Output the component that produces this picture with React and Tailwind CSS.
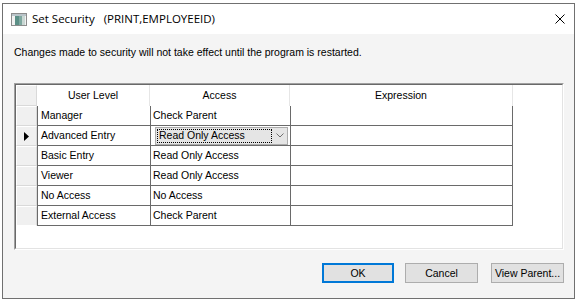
import React from 'react';

const rows = [
  { level: 'Manager', access: 'Check Parent' },
  { level: 'Advanced Entry', access: 'Read Only Access', active: true },
  { level: 'Basic Entry', access: 'Read Only Access' },
  { level: 'Viewer', access: 'Read Only Access' },
  { level: 'No Access', access: 'No Access' },
  { level: 'External Access', access: 'Check Parent' },
];

const sans = { fontFamily: '"Liberation Sans", Arial, sans-serif' };

const TitleIcon = () => (
  <svg width="16" height="13" viewBox="0 0 16 13">
    <rect x="0.5" y="0.5" width="15" height="12" fill="#f2f2f2" stroke="#8c8c8c" />
    <rect x="1" y="1" width="14" height="2" fill="#b9c4c9" />
    <rect x="4" y="3" width="10" height="9" fill="#7fa8a0" />
    <rect x="4" y="3" width="4" height="9" fill="#5b8f86" />
    <rect x="11" y="3" width="3" height="9" fill="#c9d7d3" />
  </svg>
);

const CloseIcon = () => (
  <svg width="10" height="10" viewBox="0 0 10 10">
    <path d="M0.5 0.5 L9.5 9.5 M9.5 0.5 L0.5 9.5" stroke="#000" strokeWidth="1" />
  </svg>
);

const RowHeader = ({ active, last }) => (
  <div className={`w-[21px] shrink-0 bg-[#f0f0f0] border border-white border-r-[#d9d9d9] ${last ? '' : 'border-b-[#d9d9d9]'} flex items-center justify-center`}>
    {active && (
      <svg width="5" height="9" viewBox="0 0 5 9">
        <path d="M0 0 L5 4.5 L0 9 Z" fill="#000" />
      </svg>
    )}
  </div>
);

const Combo = ({ value }) => (
  <div className="mx-[2px] my-[1px] flex-1 flex items-center bg-[#e5e5e5] border border-[#acacac] h-[18px]">
    <div className="ml-[1px] h-[14px] w-[115px] border border-dotted border-black flex items-center pl-[1px] leading-none">
      {value}
    </div>
    <div className="flex-1 flex justify-center">
      <svg width="8" height="5" viewBox="0 0 8 5">
        <path d="M0.5 0.5 L4 4 L7.5 0.5" stroke="#707070" fill="none" strokeWidth="1" />
      </svg>
    </div>
  </div>
);

const Button = ({ children, primary, className }) => (
  <button
    type="button"
    className={`h-[20px] bg-[#e1e1e1] text-black text-[10.5px] leading-none ${primary ? 'border-2 border-[#0078d7]' : 'border border-[#adadad]'} ${className}`}
  >
    {children}
  </button>
);

export default function App() {
  return (
    <div className="w-[577px] h-[302px] bg-white overflow-hidden pt-[3px] pl-[2px]" style={sans}>
      <div className="w-[573px] h-[296px] border border-[#707070] flex flex-col">
        {/* title bar */}
        <div className="h-[30px] bg-white flex items-center pl-[8px] pr-[9px]">
          <TitleIcon />
          <span className="ml-[5px] text-[11.5px] text-black" style={{ fontFamily: '"Open Sans", "Noto Sans", sans-serif' }}>
            Set Security
          </span>
          <span className="ml-[9px] text-[11.5px] text-black" style={{ fontFamily: '"Open Sans", "Noto Sans", sans-serif' }}>
            (PRINT,EMPLOYEEID)
          </span>
          <div className="ml-auto flex items-center">
            <CloseIcon />
          </div>
        </div>

        {/* body */}
        <div className="flex-1 bg-[#f4f4f4] flex flex-col pl-[11px] pr-[10px]">
          <p className="mt-[12px] text-[10.5px] leading-[12px] text-black">
            Changes made to security will not take effect until the program is restarted.
          </p>

          {/* grid */}
          <div className="mt-[25px] w-[550px] h-[167px] border border-[#a0a0a0] border-r-white border-b-white">
            <div className="h-full border border-[#696969] border-r-[#e3e3e3] border-b-[#e3e3e3] bg-white text-[10.5px] text-black">
              {/* header */}
              <div className="flex h-[21px]">
                <RowHeader />
                <div className="w-[113px] flex items-center justify-center border-r border-[#e6e6e6]">User Level</div>
                <div className="w-[140px] flex items-center justify-center border-r border-[#e6e6e6]">Access</div>
                <div className="w-[223px] flex items-center justify-center border-r border-[#e6e6e6]">Expression</div>
              </div>
              {rows.map((r, i) => (
                <div key={r.level} className="flex h-[20px]">
                  <RowHeader active={r.active} last={i === rows.length - 1} />
                  <div className="w-[113px] flex items-center pl-[3px] border-l border-b border-[#6a6a6a]">{r.level}</div>
                  <div className="w-[140px] flex items-center pl-[2px] border-l border-b border-[#6a6a6a]">
                    {r.active ? <Combo value={r.access} /> : r.access}
                  </div>
                  <div className="w-[223px] border-l border-r border-b border-[#6a6a6a]" />
                </div>
              ))}
            </div>
          </div>

          {/* buttons */}
          <div className="mt-[13px] flex justify-end">
            <Button primary className="w-[72px]">OK</Button>
            <Button className="w-[73px] ml-[11px]">Cancel</Button>
            <Button className="w-[73px] ml-[13px]">View Parent...</Button>
          </div>
        </div>
      </div>
    </div>
  );
}
